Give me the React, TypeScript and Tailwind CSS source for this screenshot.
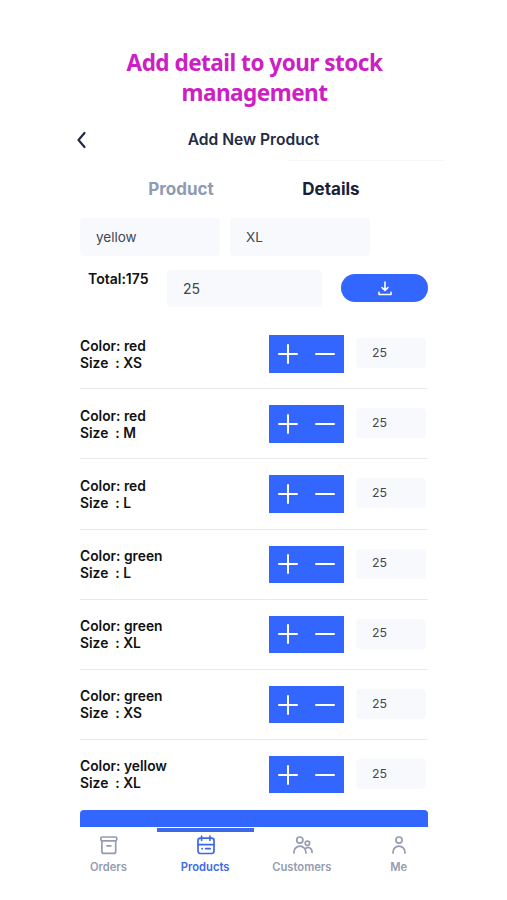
import React from 'react';

const variants = [
    { color: 'red', size: 'XS', qty: 25 },
    { color: 'red', size: 'M', qty: 25 },
    { color: 'red', size: 'L', qty: 25 },
    { color: 'green', size: 'L', qty: 25 },
    { color: 'green', size: 'XL', qty: 25 },
    { color: 'green', size: 'XS', qty: 25 },
    { color: 'yellow', size: 'XL', qty: 25 },
];

const iconProps = {
    width: 20,
    height: 20,
    viewBox: '0 0 20 20',
    fill: 'none',
    stroke: 'currentColor',
    strokeWidth: 1.7,
    strokeLinecap: 'round' as const,
    strokeLinejoin: 'round' as const,
};

const OrdersIcon = () => (
    <svg {...iconProps}>
        <rect x="1.8" y="2" width="16" height="3.8" rx="1.5" />
        <path d="M2.9 6v10.4a2 2 0 0 0 2 2h9.8a2 2 0 0 0 2-2V6M8 10.9h3.8" />
    </svg>
);

const ProductsIcon = () => (
    <svg {...iconProps}>
        <rect x="2" y="3.2" width="16" height="15.3" rx="2.4" />
        <path d="M2 9.6h16M5.6 1.2v4M13.9 1.2v4M6 13.7h.2M9.6 13.7h4.6" />
    </svg>
);

const CustomersIcon = () => (
    <svg {...iconProps}>
        <circle cx="6.8" cy="5.1" r="3.1" />
        <path d="M.9 18v-.8a6 6 0 0 1 12 0v.8" />
        <circle cx="14.4" cy="8.3" r="2.2" />
        <path d="M12.9 13.2a3.9 3.9 0 0 1 6.1 3.3v.9" />
    </svg>
);

const MeIcon = () => (
    <svg {...iconProps}>
        <circle cx="10" cy="5.1" r="3.1" />
        <path d="M4 18v-.8a6 6 0 0 1 12 0v.8" />
    </svg>
);

const tabs = [
    { label: 'Orders', icon: <OrdersIcon />, active: false },
    { label: 'Products', icon: <ProductsIcon />, active: true },
    { label: 'Customers', icon: <CustomersIcon />, active: false },
    { label: 'Me', icon: <MeIcon />, active: false },
];

const VariantRow: React.FC<{ color: string, size: string, qty: number, last: boolean }> = ({ color, size, qty, last }) => (
    <div className={`flex h-[70.1px] shrink-0 ${last ? '' : 'border-b border-[#e9eaed]'}`}>
        <div className="w-[189px] pt-[18.5px] text-[13.8px] leading-[17px] font-semibold whitespace-pre text-[#111111]">
            <p>Color: {color}</p>
            <p>{'Size  : '}{size}</p>
        </div>
        <div className="mt-4 flex h-[37.5px] w-[75px] bg-[#3366ff] text-white">
            <button className="flex w-1/2 items-center justify-center">
                <svg width="20" height="20" viewBox="0 0 20 20" stroke="currentColor" strokeWidth="2" strokeLinecap="round"><path d="M10 1v18M1 10h18" /></svg>
            </button>
            <button className="flex w-1/2 items-center justify-center">
                <svg width="20" height="20" viewBox="0 0 20 20" stroke="currentColor" strokeWidth="2" strokeLinecap="round"><path d="M1 10h18" /></svg>
            </button>
        </div>
        <div className="mt-[19px] ml-3 flex h-[30px] w-[70px] items-center rounded bg-[#f7f9fc] px-4 text-[12.3px] text-[#444650]">{qty}</div>
    </div>
);

const App: React.FC = () => {
    return (
        <div className="flex h-[900px] w-[507px] flex-col bg-white font-['Inter',sans-serif] [font-feature-settings:'calt'_0]">
            <h1 className="h-[119px] shrink-0 pt-12 pl-0.5 text-center font-['Noto_Sans',sans-serif] text-[22.5px] leading-[29.5px] font-bold tracking-[-0.5px] text-[#cc20c4]">
                Add detail to your stock<br />management
            </h1>
            <div className="mx-auto flex w-[383px] flex-col">
                <header className="flex h-[41px] items-center justify-between px-3">
                    <svg width="14" height="20" viewBox="0 0 14 20" fill="none" stroke="#222b45" strokeWidth="2.2" strokeLinecap="round" strokeLinejoin="round"><path d="M10.5 3L4.5 10l6 7" /></svg>
                    <h2 className="text-[15.6px] font-semibold text-[#222b45]">Add New Product</h2>
                    <span className="w-3.5" />
                </header>
                <div className="ml-auto h-px w-[156px] bg-[#f7f7f8]" />
                <main className="ml-[18px] flex h-[666px] w-[348px] flex-col overflow-hidden">
                    <div className="flex h-[57px] shrink-0 pl-[26px] text-[17px] font-bold">
                        <span className="flex w-[150px] items-center justify-center text-[#8f9bb3]">Product</span>
                        <span className="flex w-[150px] items-center justify-center text-[#192038]">Details</span>
                    </div>
                    <div className="flex h-[38px] shrink-0 gap-2.5 text-[13.5px] text-[#444650]">
                        <div className="flex w-[140px] items-center rounded bg-[#f7f9fc] px-4">yellow</div>
                        <div className="flex w-[140px] items-center rounded bg-[#f7f9fc] px-4">XL</div>
                    </div>
                    <div className="mt-3.5 flex h-[37px] shrink-0">
                        <p className="w-[87px] pl-2 text-[14px] leading-[18px] font-semibold text-[#111111]">Total:175</p>
                        <div className="flex w-[155px] items-center rounded bg-[#f7f9fc] px-4 text-[14px] text-[#444650]">25</div>
                        <button className="mt-1 ml-[19px] flex h-7 w-[87px] items-center justify-center rounded-full bg-[#3366ff] text-white">
                            <svg width="14" height="15" viewBox="0 0 14 15" fill="none" stroke="currentColor" strokeWidth="1.6" strokeLinecap="round" strokeLinejoin="round"><path d="M7 1v8M4 6.5L7 9.4l3-2.9M1 11.3v2.2h12v-2.2" /></svg>
                        </button>
                    </div>
                    <div className="mt-[12.3px] flex shrink-0 flex-col">
                        {variants.map((v, i) => (
                            <VariantRow key={i} color={v.color} size={v.size} qty={v.qty} last={i === variants.length - 1} />
                        ))}
                    </div>
                    <div className="h-10 shrink-0 rounded bg-[#3366ff]" />
                </main>
                <nav className="-ml-0.5 flex h-[60px] w-[387px] pt-px">
                    {tabs.map(t => (
                        <div key={t.label} className={`flex w-[96.8px] flex-col items-center ${t.active ? 'text-[#3d68e8]' : 'text-[#959bb0]'}`}>
                            <div className={`h-[3.5px] w-full ${t.active ? 'bg-[#3d68e8]' : ''}`} />
                            <div className="mt-[3.5px] ml-[1.5px]">{t.icon}</div>
                            <span className="mt-1 text-[11.2px] leading-4 font-semibold">{t.label}</span>
                        </div>
                    ))}
                </nav>
            </div>
        </div>
    );
};

export default App;
